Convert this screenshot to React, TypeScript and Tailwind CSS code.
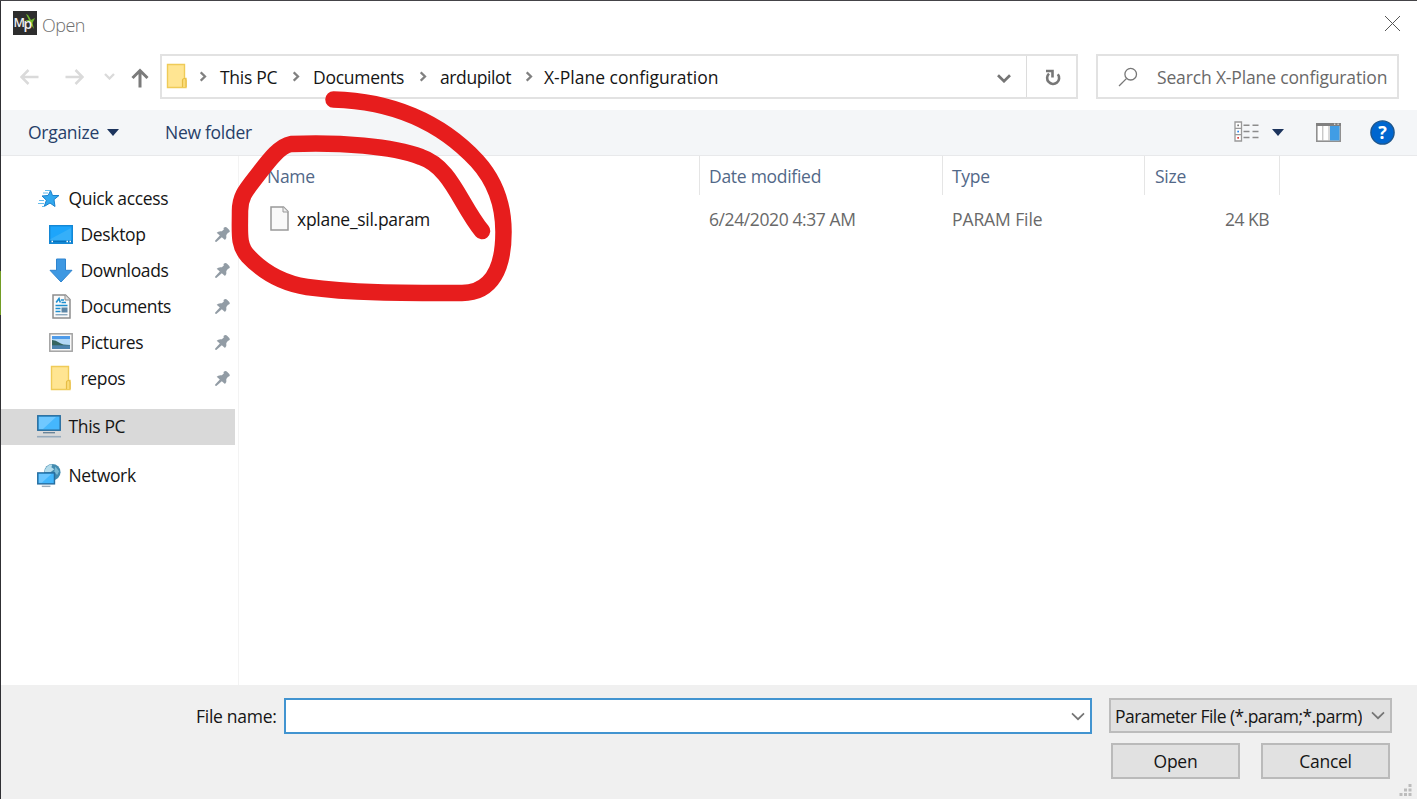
import type { ReactNode } from "react";

const Folder = () => (
  <svg width="22" height="26" viewBox="0 0 22 26">
    <path d="M1.5 1.5H18.5V15.5H20V24.5H1.5Z" fill="#ffe592" stroke="#efcb58" strokeWidth="1.4" />
    <path d="M16.5 24V17.5Q16.5 15.5 18.5 15.5Q20 15.5 20 17.5V24" fill="#fbdc79" stroke="#e6bd45" strokeWidth="1.2" />
  </svg>
);

const Crumb = () => (
  <svg width="8" height="11" viewBox="0 0 8 11" fill="none" stroke="#808080" strokeWidth="2.3">
    <path d="M.7 1.2L5 5.5L.7 9.8" />
  </svg>
);

const Chevron = ({ bold = false }: { bold?: boolean }) => (
  <svg width="14" height="9" viewBox="0 0 14 9" fill="none" stroke="#757575" strokeWidth={bold ? 2.7 : 1.7}>
    <path d="M1 1.3L7 7.2L13 1.3" />
  </svg>
);

const Pin = () => (
  <svg width="17" height="17" viewBox="0 0 17 17">
    <path d="M9.5 2Q11.5 .3 12.8 1.5L15.3 4Q16.6 5.5 15 6.5L14 6.8L12.3 9Q13 12.2 11 14L7.8 11.3L2.3 16L1 15.6L1.2 14.6L5.8 9.6L2.7 6.8Q4.5 4.7 7.8 5.3L9.8 3.5Z" fill="#929ca5" />
  </svg>
);

const Star = () => (
  <svg width="22" height="19" viewBox="0 0 22 19">
    <path d="M12.600 1.500L14.500 6.500H21L16 10.600L17 17.500L12 14L6.200 17.500L8.400 11.200L4 7L10.100 6.500Z" fill="#32a8ee" stroke="#1980cc" />
    <path d="M7 1.500H12M5 4H10M1 11.500H6M0 14.500H6M4 17.500H7" stroke="#65bced" strokeWidth="1.2" />
  </svg>
);

const Desktop = () => (
  <svg width="24" height="19" viewBox="0 0 24 19">
    <rect x=".7" y=".7" width="22.6" height="17.6" fill="#1da5fb" stroke="#1487d5" strokeWidth="1.4" />
    <path d="M1.5 14L22 3V16H1.5Z" fill="#35aff9" />
    <path d="M1 16.5H23" stroke="#0872bc" strokeWidth="2" />
    <path d="M2.5 16.5H4M17.5 16.5H19M20.5 16.5H22" stroke="#fff" strokeWidth="1.3" />
  </svg>
);

const Download = () => (
  <svg width="24" height="25" viewBox="0 0 24 25">
    <path d="M7.5 1H16.5V12.3H23L12 24L1 12.3H7.5Z" fill="#3e98e2" stroke="#2e84cf" />
  </svg>
);

const DocumentIcon = () => (
  <svg width="19" height="25" viewBox="0 0 19 25">
    <path d="M1 1H13.5L18 5.5V24H1Z" fill="#fafafa" stroke="#8d8d8d" strokeWidth="1.5" />
    <path d="M13 1V6H18" fill="#e2e2e2" stroke="#8d8d8d" />
    <path d="M4.200 8.500L7 4.500L8.300 8.500M9 6H12M9.500 8.500H14M3.500 11.500H15.500M3.500 14.500H8.500M3.500 17.500H8.500" fill="none" stroke="#1d8ecf" strokeWidth="1.6" />
    <path d="M3.5 20.7H15.5" stroke="#8ba9bf" strokeWidth="1.4" />
    <rect x="9.5" y="13.5" width="6" height="5" fill="#5d86a5" />
  </svg>
);

const Picture = () => (
  <svg width="24" height="19" viewBox="0 0 24 19">
    <rect x=".8" y=".8" width="22.4" height="17.4" fill="#f8f8f8" stroke="#a3a3a3" strokeWidth="1.5" />
    <rect x="3" y="3" width="18" height="13" fill="#b3d9f6" />
    <rect x="3" y="3" width="18" height="3" fill="#4e9be9" />
    <path d="M3 7Q7 7 10 9.5T21 12V13H3Z" fill="#35655f" />
    <rect x="3" y="12.3" width="18" height="3.7" fill="#4c83ad" />
  </svg>
);

const Computer = () => (
  <svg width="24" height="23" viewBox="0 0 24 23">
    <rect x=".8" y=".8" width="22.4" height="14.4" fill="#45b7fd" stroke="#2a6f9f" strokeWidth="1.5" />
    <path d="M2 2H19L6 14H2Z" fill="#70c8ff" />
    <path d="M6 17.7H18" stroke="#668095" strokeWidth="1.3" />
    <path d="M0 21.7H24" stroke="#97abbc" strokeWidth="1.6" />
  </svg>
);

const NetworkIcon = () => (
  <svg width="25" height="25" viewBox="0 0 25 25">
    <circle cx="16" cy="9" r="8.5" fill="#438baf" />
    <path d="M8.5 6Q11 .8 16 1L15 4L18 6L14 9L8 9Z" fill="#b4dceb" />
    <path d="M19 3L23 8L21 12L18 9Z" fill="#79b9d4" />
    <rect x=".8" y="9.8" width="17.4" height="11.4" fill="#42b6fc" stroke="#276d9f" strokeWidth="1.5" />
    <path d="M2 11H15L5 20H2Z" fill="#6bc6ff" />
    <path d="M5 23.8H14" stroke="#9baab8" strokeWidth="1.5" />
  </svg>
);

function NavItem({ icon, label, pad, pin }: { icon: ReactNode; label: string; pad: string; pin?: boolean }) {
  return (
    <div className={`flex h-9 w-[234px] shrink-0 items-center ${pad}`}>
      <span className="flex w-6 shrink-0 justify-center">{icon}</span>
      <span className="ml-[7.5px] flex-1 whitespace-nowrap tracking-[-0.35px]">{label}</span>
      {pin && <span className="mr-[4px]"><Pin /></span>}
    </div>
  );
}

export default function App() {
  return (
    <div className="relative flex h-[799px] w-[1417px] overflow-hidden border-t border-[#444347] bg-white font-['Open_Sans',sans-serif] text-[17.5px] leading-6 tracking-[-0.28px] text-[#151515]">
      <div className="flex w-px shrink-0 flex-col bg-[#303034]">
        <div className="mt-[270px] h-11 bg-[#729c24]" />
      </div>
      <div className="flex w-[1416px] flex-col">
        <header className="flex h-[47px] shrink-0 items-center justify-between pl-3 pr-[17px]">
          <div className="flex h-full items-start pt-[10px]">
            <svg width="24" height="24" viewBox="0 0 24 24">
              <rect width="24" height="24" fill="#2d2d2d" />
              <path d="M13 3L15 4L18 9L22 7L21 9L19.5 12L21 18L16 11L12 9L16 9Z" fill="#70b72b" />
              <text x=".5" y="16" fontSize="12.500" fontWeight="600" fill="#eee" fontFamily="Open Sans" letterSpacing="0">M</text>
              <text x="10.500" y="18" fontSize="14" fontWeight="600" fill="#eee" fontFamily="Open Sans" letterSpacing="0">p</text>
            </svg>
            <span className="ml-[5px] mt-[2px] text-[18px] font-light tracking-[-0.5px] text-[#6f6f6f]">Open</span>
          </div>
          <svg className="mb-[2px]" width="15" height="15" viewBox="0 0 15 15" stroke="#555" strokeWidth="1">
            <path d="M0 0L15 15M15 0L0 15" />
          </svg>
        </header>

        <div className="flex h-[62px] shrink-0 items-start pt-[6px]">
          <div className="flex h-[46px] w-[159px] items-center pl-[19px]">
            <svg width="19" height="16" viewBox="0 0 19 16" fill="none" stroke="#dadada" strokeWidth="2.5"><path d="M18.5 8H2M8.5 1L1.5 8L8.5 15" /></svg>
            <svg className="ml-[26px]" width="19" height="16" viewBox="0 0 19 16" fill="none" stroke="#dadada" strokeWidth="2.5"><path d="M.5 8H17M10.5 1L17.500 8L10.5 15" /></svg>
            <svg className="mb-[2px] ml-[20px]" width="11" height="7" viewBox="0 0 11 7" fill="none" stroke="#dadada" strokeWidth="2.3"><path d="M1 1L5.5 5.5L10 1" /></svg>
            <svg className="ml-[16px] mt-[2px]" width="18" height="20" viewBox="0 0 18 20" fill="none" stroke="#7b7b7b" strokeWidth="3"><path d="M9 19.5V2.5M1.500 10L9 2.500L16.500 10" /></svg>
          </div>
          <div className="flex h-[45px] w-[918px] items-center border-2 border-[#e2e2e2]">
            <span className="mb-[2px] ml-1 flex w-[22px]"><Folder /></span>
            <span className="ml-[12px] w-[20px]"><Crumb /></span>
            <span className="w-[73px] whitespace-nowrap">This PC</span>
            <span className="w-[20px]"><Crumb /></span>
            <span className="w-[107px] whitespace-nowrap">Documents</span>
            <span className="w-[20px]"><Crumb /></span>
            <span className="w-[86px] whitespace-nowrap tracking-[-0.4px]">ardupilot</span>
            <span className="w-[18px]"><Crumb /></span>
            <span className="flex-1 whitespace-nowrap tracking-[0px]">X-Plane configuration</span>
            <span className="mr-[15px] mt-[3px]"><Chevron bold /></span>
            <span className="flex h-full w-[50px] items-center justify-center border-l border-[#dcdcdc]">
              <svg className="ml-[2px] mt-[2px]" width="16" height="18" viewBox="0 0 16 18" fill="none" stroke="#777" strokeWidth="2.6"><path d="M12.8 5.2A6 6 0 1 1 4 4.6M1 2H7.5V8.5" /></svg>
            </span>
          </div>
          <div className="ml-[18px] flex h-[45px] w-[303px] items-center border-2 border-[#e2e2e2]">
            <svg className="ml-5" width="20" height="20" viewBox="0 0 20 20" fill="none" stroke="#777" strokeWidth="1.3"><circle cx="12.7" cy="7.2" r="5.8" /><path d="M8.4 11.600L1 19" /></svg>
            <span className="ml-[19px] whitespace-nowrap tracking-[-0.15px] text-[#696969]">Search X-Plane configuration</span>
          </div>
        </div>

        <div className="flex h-[46px] shrink-0 items-center border-b border-[#e8e9eb] bg-[#f4f6f8] text-[#273f69]">
          <span className="mb-px ml-[27px] w-[79px] whitespace-nowrap">Organize</span>
          <svg width="12" height="7" viewBox="0 0 12 7"><path d="M0 0H12L6 7Z" fill="#1c345d" /></svg>
          <span className="mb-px ml-[46px] whitespace-nowrap">New folder</span>
          <div className="ml-auto mr-[22px] flex items-center">
            <svg className="mb-[2px]" width="26" height="21" viewBox="0 0 26 21" fill="none">
              <path d="M1 1H7.5V20H1ZM1 7.3H7.5M1 13.6H7.5" fill="#fff" stroke="#999" strokeWidth="1.3" />
              <path d="M9.500 4.2H15.500M18.500 4.2H24.500M9.500 10.4H15.500M18.500 10.4H24.500M9.500 16.6H15.500M18.500 16.6H24.500" stroke="#8c8c8c" strokeWidth="1.5" />
              <rect x="3.3" y="3.5" width="1.7" height="1.7" fill="#777" /><rect x="3.3" y="9.7" width="1.7" height="1.7" fill="#2986ed" /><rect x="3.3" y="16" width="1.7" height="1.7" fill="#d93b3b" />
            </svg>
            <svg className="ml-[12px]" width="12" height="7" viewBox="0 0 12 7"><path d="M0 0H12L6 7Z" fill="#1c345d" /></svg>
            <svg className="ml-[32px]" width="25" height="19" viewBox="0 0 25 19">
              <rect x=".8" y=".8" width="23.4" height="17.4" fill="#fff" stroke="#909090" strokeWidth="1.6" />
              <path d="M0 1.500H25" stroke="#808080" strokeWidth="3" /><path d="M18 1.200H19.300M21.500 1.200H22.800" stroke="#fff" />
              <path d="M6.8 3V18M13 3V18" stroke="#b2b2b2" /><rect x="14" y="3" width="9.5" height="14.5" fill="#419de5" />
            </svg>
            <svg className="ml-[29px]" width="25" height="25" viewBox="0 0 25 25">
              <circle cx="12.5" cy="12.5" r="11.6" fill="#0066cf" stroke="#1e568c" strokeWidth="1.4" />
              <text x="12.5" y="19" textAnchor="middle" fontSize="18" fontWeight="700" fill="white" fontFamily="Open Sans">?</text>
            </svg>
          </div>
        </div>

        <main className="flex h-[529px] shrink-0">
          <nav className="flex w-[238px] shrink-0 flex-col border-r border-[#f3f3f3] pt-[24px]">
            <NavItem icon={<Star />} label="Quick access" pad="pl-[37px] -ml-px" />
            <NavItem icon={<Desktop />} label="Desktop" pad="pl-12" pin />
            <NavItem icon={<Download />} label="Downloads" pad="pl-12" pin />
            <NavItem icon={<DocumentIcon />} label="Documents" pad="pl-12" pin />
            <NavItem icon={<Picture />} label="Pictures" pad="pl-12" pin />
            <NavItem icon={<Folder />} label="repos" pad="pl-12" pin />
            <div className="mt-[13px] w-[234px] bg-[#d9d9d9] pb-px"><div className="-mt-px"><NavItem icon={<Computer />} label="This PC" pad="pl-[36px]" /></div></div>
            <div className="mt-3"><NavItem icon={<NetworkIcon />} label="Network" pad="pl-[36px]" /></div>
          </nav>
          <section className="ml-px flex-1">
            <div className="flex h-[39px] text-[#526888]">
              <span className="w-[460px] border-r border-[#e5e5e5] pl-[27px] pt-[8px]">Name</span>
              <span className="w-[243px] border-r border-[#e5e5e5] pl-[9px] pt-[8px]">Date modified</span>
              <span className="w-[202px] border-r border-[#e5e5e5] pl-[9px] pt-[8px]">Type</span>
              <span className="w-[135px] border-r border-[#e5e5e5] pl-[10px] pt-[8px]">Size</span>
            </div>
            <div className="mt-[6px] flex h-9 items-center text-[#696969]">
              <div className="flex w-[460px] items-center pl-[30px] text-[#151515]">
                <svg className="mb-[2px]" width="19" height="25" viewBox="0 0 19 25"><path d="M1 1H13.5L18 5.5V24H1Z" fill="#f9f9f9" stroke="#999" strokeWidth="1.5" /><path d="M13 1V6H18" fill="#eee" stroke="#999" /></svg>
                <span className="ml-[8px]">xplane_sil.param</span>
              </div>
              <span className="w-[243px] pl-[9px] tracking-[-0.4px]">6/24/2020 4:37 AM</span>
              <span className="w-[202px] pl-[9px] tracking-[-0.1px]">PARAM File</span>
              <span className="w-[124px] text-right tracking-[-0.5px]">24 KB</span>
            </div>
          </section>
        </main>

        <footer className="flex h-[114px] shrink-0 bg-[#f0f0f0]">
          <div className="mt-[13px] flex h-9 items-center">
            <span className="ml-[195px] w-[88px] whitespace-nowrap">File name:</span>
            <div className="flex h-9 w-[808px] items-center justify-end border-2 border-[#4294d0] bg-white pr-[5px]"><Chevron /></div>
          </div>
          <div className="ml-[17px] mt-[13px] w-[283px]">
            <div className="flex h-[35px] items-center border-2 border-[#bcbcbc] bg-[#e1e1e1] pl-[4px]">
              <span className="w-[247px] overflow-hidden whitespace-nowrap tracking-[-0.55px]">Parameter File (*.param;*.parm)</span>
              <span className="ml-[9px]"><Chevron /></span>
            </div>
            <div className="mt-[10px] flex gap-[21px] pl-[2px]">
              <button className="h-9 w-[129px] border-2 border-[#bababa] bg-[#e1e1e1]">Open</button>
              <button className="h-9 w-[129px] border-2 border-[#bababa] bg-[#e1e1e1]">Cancel</button>
            </div>
          </div>
          <svg className="mb-[2px] ml-[7px] self-end" width="14" height="14" viewBox="0 0 14 14" fill="#bcbcbc"><path d="M9.5 1H12.5V4H9.5ZM5 5.5H8V8.5H5ZM9.5 5.5H12.5V8.5H9.5ZM.5 10H3.5V13H.5ZM5 10H8V13H5ZM9.5 10H12.5V13H9.5Z" /></svg>
        </footer>
      </div>
      <svg className="pointer-events-none absolute left-0 top-[-1px]" width="1417" height="799" viewBox="0 0 1417 799" fill="none" stroke="#e71d1d" strokeWidth="16.5" strokeLinecap="round" strokeLinejoin="round">
        <path d="M333.500 99.500C390 101 440 121 477 161C497 183 503.500 208 503.500 232C503.500 268 492 293 462 293C400 293 350 293 307 287C281 283 263 272 248 256C238 245 240 234 240 211C240 195 247 189 260 172C270 159 280 146 291 144C340 142 392 146 421 157C451 167 460 204 482 231" />
      </svg>
    </div>
  );
}
